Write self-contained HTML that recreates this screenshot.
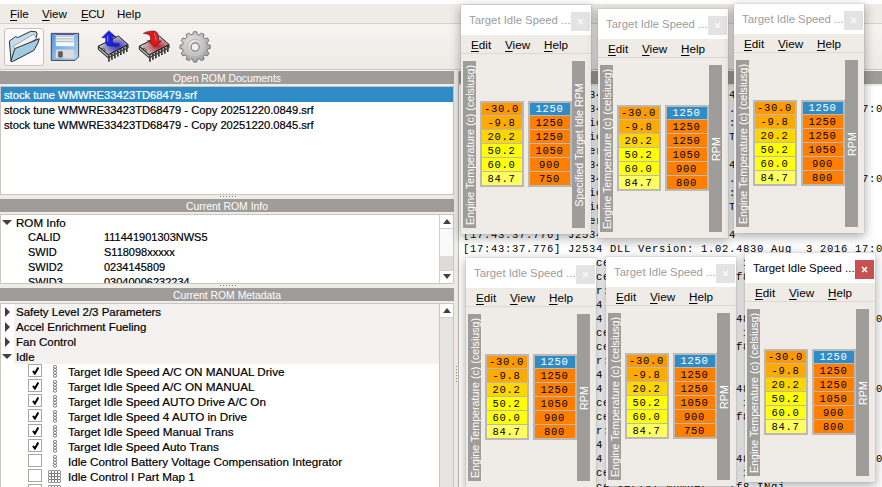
<!DOCTYPE html>
<html><head><meta charset="utf-8">
<style>
*{box-sizing:border-box;margin:0;padding:0}
html,body{width:882px;height:487px;overflow:hidden;background:#efebe7;font-family:"Liberation Sans",sans-serif;position:relative}
.a{position:absolute}
.ui{font-size:11.3px;color:#000;white-space:nowrap}
.u{text-decoration:underline;text-underline-offset:1.5px}
.hdr{position:absolute;height:13px;background:#9f9d9a;color:#fff;font-size:10.4px;text-align:center;line-height:13px;padding-top:1px;white-space:nowrap}
.box{position:absolute;background:#fff;border:1px solid #c9c5c1}
.row{position:absolute;left:0;height:15px;line-height:15px;font-size:11.3px;white-space:nowrap;-webkit-text-stroke:0.2px currentColor}
.con{position:absolute;left:4px;top:2px;margin:0;font-family:"Liberation Mono",monospace;font-size:10.5px;letter-spacing:0.7px;line-height:14px;color:#000;white-space:pre}
.win{position:absolute;width:130px;height:229px;background:#efebe7;box-shadow:0 0 0 1px rgba(120,120,120,0.10),0 3px 10px 1px rgba(0,0,0,0.3)}
.wt{position:absolute;left:0;top:0;width:130px;height:30px;background:#fff;padding-left:8px;font-size:11.35px;line-height:30px;white-space:nowrap}
.wc{position:absolute;left:110px;top:7px;width:19px;height:19px;text-align:center;font-size:13px;line-height:18px}
.wm{position:absolute;left:0;top:30px;width:130px;height:19px;background:#efebe7;border-bottom:1px solid #dcd8d4;font-size:11.7px;line-height:19px;white-space:nowrap}
.wm .m1{position:absolute;left:10px;top:0}
.wm .m2{position:absolute;left:44px;top:0}
.wm .m3{position:absolute;left:83px;top:0}
.wl{position:absolute;top:56px;width:13px;height:167px;background:#9f9d9a}
.wl span{position:absolute;left:50%;top:50%;transform:translate(-50%,-50%) rotate(-90deg);color:#fff;font-size:10.7px;line-height:13px;white-space:nowrap}
.tb{position:absolute;top:96px;width:44px;height:86px;background:#bcb8b4}
.cell{position:absolute;left:2px;width:40px;text-align:center;font-family:"Liberation Mono",monospace;font-size:10.5px;letter-spacing:0.7px;text-indent:-1px;color:#000}
</style></head><body>
<div class="a" style="left:0;top:0;width:882px;height:4px;background:#fff"></div>
<div class="a" style="left:0;top:4px;width:882px;height:19px;background:#efebe7"></div>
<div class="a" style="left:0;top:23px;width:882px;height:1px;background:#d6d2ce"></div>
<div class="a ui" style="left:10px;top:6px;line-height:15px;font-size:11.6px;letter-spacing:0px"><span class="u">F</span>ile</div>
<div class="a ui" style="left:42px;top:6px;line-height:15px;font-size:11.6px;letter-spacing:0px"><span class="u">V</span>iew</div>
<div class="a ui" style="left:81px;top:6px;line-height:15px;font-size:11.6px;letter-spacing:-0.45px"><span class="u">E</span>CU</div>
<div class="a ui" style="left:117px;top:6px;line-height:15px;font-size:11.6px;letter-spacing:0px">Help</div>
<div class="a" style="left:0;top:24px;width:882px;height:45px;background:linear-gradient(#f6f3f0,#eeebe7)"></div>
<div class="a" style="left:0;top:69px;width:882px;height:1px;background:#c9c5c1"></div>
<div class="a" style="left:0;top:70px;width:882px;height:1px;background:#f8f6f4"></div>
<!-- toolbar icons -->
<div class="a" style="left:4px;top:28px;width:40px;height:38px;border:1px solid #c6c3c0;border-radius:3px;background:#fbfaf9"></div>
<svg class="a" style="left:2px;top:25px" width="44" height="44" viewBox="0 0 487 487">
 <path d="M82 178 L150 128 L172 140 L318 70 L378 76 L388 98 L372 165 L135 315 L100 398 Z" fill="#c2ddec" stroke="#2b2b2b" stroke-width="11" stroke-linejoin="round"/>
 <path d="M128 232 L352 100 L382 150 L150 292 Z" fill="#f2f2f2" stroke="#555" stroke-width="5"/>
 <path d="M98 402 L142 262 L412 152 L398 200 L352 282 L118 404 Z" fill="#9fcbe3" stroke="#2b2b2b" stroke-width="11" stroke-linejoin="round"/>
</svg>
<svg class="a" style="left:46px;top:27px" width="38" height="38" viewBox="0 0 487 487">
 <defs><linearGradient id="fg" x1="0" y1="0" x2="1" y2="1"><stop offset="0" stop-color="#4f93dc"/><stop offset="1" stop-color="#b5daf5"/></linearGradient></defs>
 <path d="M68 82 L418 82 L418 382 L372 428 L68 428 Z" fill="url(#fg)" stroke="#3a3a3a" stroke-width="12" stroke-linejoin="round"/>
 <rect x="125" y="88" width="235" height="158" fill="#f4f8fa"/>
 <rect x="125" y="88" width="235" height="12" fill="#2626c0"/>
 <rect x="130" y="108" width="225" height="18" fill="#b9bcbc"/>
 <rect x="130" y="142" width="225" height="18" fill="#a9c9c9"/>
 <rect x="130" y="176" width="225" height="18" fill="#b9bcbc"/>
 <rect x="125" y="290" width="235" height="108" fill="#dcdcdc"/>
 <rect x="155" y="310" width="60" height="82" rx="18" fill="#5e5e5e"/>
</svg>
<svg class="a" style="left:94px;top:26px" width="38" height="38" viewBox="0 0 487 487">
 <defs><radialGradient id="cg94" cx="0.62" cy="0.55" r="0.55"><stop offset="0" stop-color="#3030c8"/><stop offset="0.6" stop-color="#8a8ac0"/><stop offset="1" stop-color="#c8c8c8"/></radialGradient></defs>
 <path d="M56 258 L56 302 L183 410 L436 282 L436 237 L183 368 Z" fill="#a8a8a8" stroke="#111" stroke-width="12" stroke-linejoin="round"/>
 <path d="M192 380 L192 454" stroke="#0a0a0a" stroke-width="20"/><path d="M194 390 L194 438" stroke="#e0e0e0" stroke-width="6"/><path d="M230 360 L230 434" stroke="#0a0a0a" stroke-width="20"/><path d="M232 370 L232 418" stroke="#e0e0e0" stroke-width="6"/><path d="M268 339 L268 413" stroke="#0a0a0a" stroke-width="20"/><path d="M270 349 L270 397" stroke="#e0e0e0" stroke-width="6"/><path d="M306 318 L306 392" stroke="#0a0a0a" stroke-width="20"/><path d="M308 328 L308 376" stroke="#e0e0e0" stroke-width="6"/><path d="M344 298 L344 372" stroke="#0a0a0a" stroke-width="20"/><path d="M346 308 L346 356" stroke="#e0e0e0" stroke-width="6"/><path d="M382 278 L382 352" stroke="#0a0a0a" stroke-width="20"/><path d="M384 288 L384 336" stroke="#e0e0e0" stroke-width="6"/><path d="M420 257 L420 331" stroke="#0a0a0a" stroke-width="20"/><path d="M422 267 L422 315" stroke="#e0e0e0" stroke-width="6"/>
 <path d="M56 258 L313 128 L436 237 L183 368 Z" fill="url(#cg94)" stroke="#111" stroke-width="12" stroke-linejoin="round"/>
 <path d="M92 292 Q120 270 140 300 L140 330" fill="none" stroke="#222" stroke-width="9"/>
 <path d="M100 150 L190 60 L282 142 L238 142 L238 206 Q240 226 322 226 L322 252 L200 258 Q150 252 150 206 L150 150 Z" fill="#2020e0" stroke="#101040" stroke-width="6" stroke-linejoin="round"/>
 <path d="M175 130 L175 200" fill="none" stroke="#9a9aff" stroke-width="14" stroke-linecap="round" opacity="0.8"/>
</svg><svg class="a" style="left:135px;top:26px" width="38" height="38" viewBox="0 0 487 487">
 <defs><radialGradient id="cg135" cx="0.62" cy="0.55" r="0.55"><stop offset="0" stop-color="#c02020"/><stop offset="0.6" stop-color="#c89090"/><stop offset="1" stop-color="#c8c8c8"/></radialGradient></defs>
 <path d="M56 258 L56 302 L183 410 L436 282 L436 237 L183 368 Z" fill="#a8a8a8" stroke="#111" stroke-width="12" stroke-linejoin="round"/>
 <path d="M192 380 L192 454" stroke="#0a0a0a" stroke-width="20"/><path d="M194 390 L194 438" stroke="#e0e0e0" stroke-width="6"/><path d="M230 360 L230 434" stroke="#0a0a0a" stroke-width="20"/><path d="M232 370 L232 418" stroke="#e0e0e0" stroke-width="6"/><path d="M268 339 L268 413" stroke="#0a0a0a" stroke-width="20"/><path d="M270 349 L270 397" stroke="#e0e0e0" stroke-width="6"/><path d="M306 318 L306 392" stroke="#0a0a0a" stroke-width="20"/><path d="M308 328 L308 376" stroke="#e0e0e0" stroke-width="6"/><path d="M344 298 L344 372" stroke="#0a0a0a" stroke-width="20"/><path d="M346 308 L346 356" stroke="#e0e0e0" stroke-width="6"/><path d="M382 278 L382 352" stroke="#0a0a0a" stroke-width="20"/><path d="M384 288 L384 336" stroke="#e0e0e0" stroke-width="6"/><path d="M420 257 L420 331" stroke="#0a0a0a" stroke-width="20"/><path d="M422 267 L422 315" stroke="#e0e0e0" stroke-width="6"/>
 <path d="M56 258 L313 128 L436 237 L183 368 Z" fill="url(#cg135)" stroke="#111" stroke-width="12" stroke-linejoin="round"/>
 <path d="M92 292 Q120 270 140 300 L140 330" fill="none" stroke="#222" stroke-width="9"/>
 <path d="M106 96 Q150 60 250 64 Q302 76 302 150 L302 192 L338 192 L250 266 L158 188 L198 188 L198 142 Q190 100 106 96 Z" fill="#e01818" stroke="#101040" stroke-width="6" stroke-linejoin="round"/>
 <path d="M250 100 Q270 130 268 190" fill="none" stroke="#ff8080" stroke-width="14" stroke-linecap="round" opacity="0.8"/>
</svg><svg class="a" style="left:176px;top:27px" width="38" height="38" viewBox="0 0 487 487">
 <defs><radialGradient id="gg" cx="0.4" cy="0.35" r="0.75"><stop offset="0" stop-color="#ececec"/><stop offset="1" stop-color="#989898"/></radialGradient></defs>
 <path d="M216 95 L225 61 L265 61 L274 95 L300 102 L324 77 L360 97 L350 131 L369 150 L403 140 L423 176 L398 200 L405 226 L439 235 L439 275 L405 284 L398 310 L423 334 L403 370 L369 360 L350 379 L360 413 L324 433 L300 408 L274 415 L265 449 L225 449 L216 415 L190 408 L166 433 L130 413 L140 379 L121 360 L87 370 L67 334 L92 310 L85 284 L51 275 L51 235 L85 226 L92 200 L67 176 L87 140 L121 150 L140 131 L130 97 L166 77 L190 102 Z" fill="url(#gg)" stroke="#707070" stroke-width="12" stroke-linejoin="round"/>
 <circle cx="245" cy="255" r="100" fill="none" stroke="#d4d4d4" stroke-width="26"/>
 <circle cx="245" cy="255" r="100" fill="none" stroke="#9a9a9a" stroke-width="6"/>
 <circle cx="245" cy="255" r="52" fill="#f2efeb" stroke="#7a7a7a" stroke-width="14"/>
</svg>


<div class="hdr" style="left:0px;top:71px;width:454px">Open ROM Documents</div>
<div class="box" style="left:0;top:86px;width:454px;height:109px">
<div class="row" style="top:0;width:452px;background:#308cc6;color:#fff;padding-left:3px;padding-top:1px;font-size:11.2px">stock tune WMWRE33423TD68479.srf</div>
<div class="row" style="top:15px;padding-left:3px;padding-top:1px;font-size:11.2px">stock tune WMWRE33423TD68479 - Copy 20251220.0849.srf</div>
<div class="row" style="top:30px;padding-left:3px;padding-top:1px;font-size:11.2px">stock tune WMWRE33423TD68479 - Copy 20251220.0845.srf</div>
</div>
<div class="hdr" style="left:0px;top:199px;width:454px">Current ROM Info</div>
<div class="box" style="left:0;top:214px;width:454px;height:70px;overflow:hidden">
<div class="a" style="left:1px;top:5px;width:0;height:0;border-left:5px solid transparent;border-right:5px solid transparent;border-top:5px solid #404040"></div>
<div class="row" style="top:0;left:15px;font-size:11.6px">ROM Info</div>
<div class="row" style="top:15px;left:27px;font-size:11px">CALID</div><div class="row" style="top:15px;left:103px;font-size:11px">111441901303NWS5</div>
<div class="row" style="top:30px;left:27px;font-size:11px">SWID</div><div class="row" style="top:30px;left:103px;font-size:11px">S118098xxxxx</div>
<div class="row" style="top:45px;left:27px;font-size:11px">SWID2</div><div class="row" style="top:45px;left:103px;font-size:11px">0234145809</div>
<div class="row" style="top:60px;left:27px;font-size:11px">SWID3</div><div class="row" style="top:60px;left:103px;font-size:11px">03040006232234</div>
<div class="a" style="left:438px;top:0;width:15px;height:68px;background:#fafafa;border-left:1px solid #d4d0cc"></div>
<div class="a" style="left:439px;top:0;width:14px;height:14px;background:#fff;border-bottom:1px solid #d4d0cc"></div>
<div class="a" style="left:439px;top:41px;width:14px;height:14px;background:#dedcd9"></div>
<div class="a" style="left:439px;top:55px;width:14px;height:13px;background:#fff;border-top:1px solid #d4d0cc"></div>
<div class="a" style="left:442px;top:4px;width:0;height:0;border-left:4px solid transparent;border-right:4px solid transparent;border-bottom:5px solid #404040"></div>
<div class="a" style="left:442px;top:59px;width:0;height:0;border-left:4px solid transparent;border-right:4px solid transparent;border-top:5px solid #404040"></div>
</div>
<div class="hdr" style="left:0px;top:288px;width:454px">Current ROM Metadata</div>
<div class="box" style="left:0;top:303px;width:454px;height:190px;overflow:hidden">
<div class="a" style="left:13px;top:0px;width:425px;height:15px;background:#f3f2f0"></div>
<div class="a" style="left:4px;top:3px;width:0;height:0;border-top:5px solid transparent;border-bottom:5px solid transparent;border-left:5px solid #404040"></div>
<div class="row" style="top:0px;left:15px;font-size:11.5px;padding-top:1px">Safety Level 2/3 Parameters</div>
<div class="a" style="left:13px;top:15px;width:425px;height:15px;background:#f3f2f0"></div>
<div class="a" style="left:4px;top:18px;width:0;height:0;border-top:5px solid transparent;border-bottom:5px solid transparent;border-left:5px solid #404040"></div>
<div class="row" style="top:15px;left:15px;font-size:11.5px;padding-top:1px">Accel Enrichment Fueling</div>
<div class="a" style="left:13px;top:30px;width:425px;height:15px;background:#f3f2f0"></div>
<div class="a" style="left:4px;top:33px;width:0;height:0;border-top:5px solid transparent;border-bottom:5px solid transparent;border-left:5px solid #404040"></div>
<div class="row" style="top:30px;left:15px;font-size:11.5px;padding-top:1px">Fan Control</div>
<div class="a" style="left:13px;top:45px;width:425px;height:15px;background:#f3f2f0"></div>
<div class="a" style="left:1px;top:50px;width:0;height:0;border-left:5px solid transparent;border-right:5px solid transparent;border-top:5px solid #404040"></div>
<div class="row" style="top:45px;left:15px;font-size:11.5px;padding-top:1px">Idle</div>
<div class="a" style="left:27px;top:60px;width:14px;height:13px;border:1px solid #a9a5a1;background:#fff"></div>
<svg class="a" style="left:30px;top:62px" width="9" height="9" viewBox="0 0 9 9"><path d="M2 4.9 L3.9 7.5 L7.3 1.6" stroke="#000" stroke-width="2" fill="none"/></svg>
<svg class="a" style="left:51px;top:61px" width="6" height="13" viewBox="0 0 6 13"><g fill="none" stroke="#6e6e6e" stroke-width="1"><rect x="1.5" y="0.5" width="3" height="2.6" rx="1"/><rect x="1.5" y="3.5" width="3" height="2.6" rx="1"/><rect x="1.5" y="6.5" width="3" height="2.6" rx="1"/><rect x="1.5" y="9.5" width="3" height="2.6" rx="1"/></g></svg>
<div class="row" style="top:60px;left:67px;font-size:11.7px">Target Idle Speed A/C ON MANUAL Drive</div>
<div class="a" style="left:27px;top:75px;width:14px;height:13px;border:1px solid #a9a5a1;background:#fff"></div>
<svg class="a" style="left:30px;top:77px" width="9" height="9" viewBox="0 0 9 9"><path d="M2 4.9 L3.9 7.5 L7.3 1.6" stroke="#000" stroke-width="2" fill="none"/></svg>
<svg class="a" style="left:51px;top:76px" width="6" height="13" viewBox="0 0 6 13"><g fill="none" stroke="#6e6e6e" stroke-width="1"><rect x="1.5" y="0.5" width="3" height="2.6" rx="1"/><rect x="1.5" y="3.5" width="3" height="2.6" rx="1"/><rect x="1.5" y="6.5" width="3" height="2.6" rx="1"/><rect x="1.5" y="9.5" width="3" height="2.6" rx="1"/></g></svg>
<div class="row" style="top:75px;left:67px;font-size:11.7px">Target Idle Speed A/C ON MANUAL</div>
<div class="a" style="left:27px;top:90px;width:14px;height:13px;border:1px solid #a9a5a1;background:#fff"></div>
<svg class="a" style="left:30px;top:92px" width="9" height="9" viewBox="0 0 9 9"><path d="M2 4.9 L3.9 7.5 L7.3 1.6" stroke="#000" stroke-width="2" fill="none"/></svg>
<svg class="a" style="left:51px;top:91px" width="6" height="13" viewBox="0 0 6 13"><g fill="none" stroke="#6e6e6e" stroke-width="1"><rect x="1.5" y="0.5" width="3" height="2.6" rx="1"/><rect x="1.5" y="3.5" width="3" height="2.6" rx="1"/><rect x="1.5" y="6.5" width="3" height="2.6" rx="1"/><rect x="1.5" y="9.5" width="3" height="2.6" rx="1"/></g></svg>
<div class="row" style="top:90px;left:67px;font-size:11.7px">Target Idle Speed AUTO Drive A/C On</div>
<div class="a" style="left:27px;top:105px;width:14px;height:13px;border:1px solid #a9a5a1;background:#fff"></div>
<svg class="a" style="left:30px;top:107px" width="9" height="9" viewBox="0 0 9 9"><path d="M2 4.9 L3.9 7.5 L7.3 1.6" stroke="#000" stroke-width="2" fill="none"/></svg>
<svg class="a" style="left:51px;top:106px" width="6" height="13" viewBox="0 0 6 13"><g fill="none" stroke="#6e6e6e" stroke-width="1"><rect x="1.5" y="0.5" width="3" height="2.6" rx="1"/><rect x="1.5" y="3.5" width="3" height="2.6" rx="1"/><rect x="1.5" y="6.5" width="3" height="2.6" rx="1"/><rect x="1.5" y="9.5" width="3" height="2.6" rx="1"/></g></svg>
<div class="row" style="top:105px;left:67px;font-size:11.7px">Target Idle Speed 4 AUTO in Drive</div>
<div class="a" style="left:27px;top:120px;width:14px;height:13px;border:1px solid #a9a5a1;background:#fff"></div>
<svg class="a" style="left:30px;top:122px" width="9" height="9" viewBox="0 0 9 9"><path d="M2 4.9 L3.9 7.5 L7.3 1.6" stroke="#000" stroke-width="2" fill="none"/></svg>
<svg class="a" style="left:51px;top:121px" width="6" height="13" viewBox="0 0 6 13"><g fill="none" stroke="#6e6e6e" stroke-width="1"><rect x="1.5" y="0.5" width="3" height="2.6" rx="1"/><rect x="1.5" y="3.5" width="3" height="2.6" rx="1"/><rect x="1.5" y="6.5" width="3" height="2.6" rx="1"/><rect x="1.5" y="9.5" width="3" height="2.6" rx="1"/></g></svg>
<div class="row" style="top:120px;left:67px;font-size:11.7px">Target Idle Speed Manual Trans</div>
<div class="a" style="left:27px;top:135px;width:14px;height:13px;border:1px solid #a9a5a1;background:#fff"></div>
<svg class="a" style="left:30px;top:137px" width="9" height="9" viewBox="0 0 9 9"><path d="M2 4.9 L3.9 7.5 L7.3 1.6" stroke="#000" stroke-width="2" fill="none"/></svg>
<svg class="a" style="left:51px;top:136px" width="6" height="13" viewBox="0 0 6 13"><g fill="none" stroke="#6e6e6e" stroke-width="1"><rect x="1.5" y="0.5" width="3" height="2.6" rx="1"/><rect x="1.5" y="3.5" width="3" height="2.6" rx="1"/><rect x="1.5" y="6.5" width="3" height="2.6" rx="1"/><rect x="1.5" y="9.5" width="3" height="2.6" rx="1"/></g></svg>
<div class="row" style="top:135px;left:67px;font-size:11.7px">Target Idle Speed Auto Trans</div>
<div class="a" style="left:27px;top:150px;width:14px;height:13px;border:1px solid #a9a5a1;background:#fff"></div>
<svg class="a" style="left:51px;top:151px" width="6" height="13" viewBox="0 0 6 13"><g fill="none" stroke="#6e6e6e" stroke-width="1"><rect x="1.5" y="0.5" width="3" height="2.6" rx="1"/><rect x="1.5" y="3.5" width="3" height="2.6" rx="1"/><rect x="1.5" y="6.5" width="3" height="2.6" rx="1"/><rect x="1.5" y="9.5" width="3" height="2.6" rx="1"/></g></svg>
<div class="row" style="top:150px;left:67px;font-size:11.7px">Idle Control Battery Voltage Compensation Integrator</div>
<div class="a" style="left:27px;top:165px;width:14px;height:13px;border:1px solid #a9a5a1;background:#fff"></div>
<svg class="a" style="left:47px;top:166px" width="14" height="14" viewBox="0 0 14 14"><g fill="none" stroke="#6e6e6e" stroke-width="1"><rect x="0.5" y="0.5" width="3" height="3" rx="1"/><rect x="0.5" y="3.5" width="3" height="3" rx="1"/><rect x="0.5" y="6.5" width="3" height="3" rx="1"/><rect x="0.5" y="9.5" width="3" height="3" rx="1"/><rect x="3.5" y="0.5" width="3" height="3" rx="1"/><rect x="3.5" y="3.5" width="3" height="3" rx="1"/><rect x="3.5" y="6.5" width="3" height="3" rx="1"/><rect x="3.5" y="9.5" width="3" height="3" rx="1"/><rect x="6.5" y="0.5" width="3" height="3" rx="1"/><rect x="6.5" y="3.5" width="3" height="3" rx="1"/><rect x="6.5" y="6.5" width="3" height="3" rx="1"/><rect x="6.5" y="9.5" width="3" height="3" rx="1"/><rect x="9.5" y="0.5" width="3" height="3" rx="1"/><rect x="9.5" y="3.5" width="3" height="3" rx="1"/><rect x="9.5" y="6.5" width="3" height="3" rx="1"/><rect x="9.5" y="9.5" width="3" height="3" rx="1"/></g></svg>
<div class="row" style="top:165px;left:67px;font-size:11.7px">Idle Control I Part Map 1</div>
<div class="a" style="left:27px;top:180px;width:14px;height:13px;border:1px solid #a9a5a1;background:#fff"></div>
<svg class="a" style="left:47px;top:181px" width="14" height="14" viewBox="0 0 14 14"><g fill="none" stroke="#6e6e6e" stroke-width="1"><rect x="0.5" y="0.5" width="3" height="3" rx="1"/><rect x="0.5" y="3.5" width="3" height="3" rx="1"/><rect x="0.5" y="6.5" width="3" height="3" rx="1"/><rect x="0.5" y="9.5" width="3" height="3" rx="1"/><rect x="3.5" y="0.5" width="3" height="3" rx="1"/><rect x="3.5" y="3.5" width="3" height="3" rx="1"/><rect x="3.5" y="6.5" width="3" height="3" rx="1"/><rect x="3.5" y="9.5" width="3" height="3" rx="1"/><rect x="6.5" y="0.5" width="3" height="3" rx="1"/><rect x="6.5" y="3.5" width="3" height="3" rx="1"/><rect x="6.5" y="6.5" width="3" height="3" rx="1"/><rect x="6.5" y="9.5" width="3" height="3" rx="1"/><rect x="9.5" y="0.5" width="3" height="3" rx="1"/><rect x="9.5" y="3.5" width="3" height="3" rx="1"/><rect x="9.5" y="6.5" width="3" height="3" rx="1"/><rect x="9.5" y="9.5" width="3" height="3" rx="1"/></g></svg>
<div class="row" style="top:180px;left:67px;font-size:11.7px">Idle Control P Part Map 1</div>
<div class="a" style="left:438px;top:0;width:15px;height:190px;background:#e6e4e1;border-left:1px solid #c9c5c1"></div>
<div class="a" style="left:439px;top:0;width:14px;height:14px;background:#fff;border-bottom:1px solid #d4d0cc"></div>
<div class="a" style="left:442px;top:4px;width:0;height:0;border-left:4px solid transparent;border-right:4px solid transparent;border-bottom:5px solid #404040"></div>
</div>
<div class="a" style="left:220px;top:196px;width:1px;height:1px;background:#8a8784;box-shadow:0 0 0.5px #b5b2af"></div>
<div class="a" style="left:223px;top:196px;width:1px;height:1px;background:#8a8784;box-shadow:0 0 0.5px #b5b2af"></div>
<div class="a" style="left:226px;top:196px;width:1px;height:1px;background:#8a8784;box-shadow:0 0 0.5px #b5b2af"></div>
<div class="a" style="left:229px;top:196px;width:1px;height:1px;background:#8a8784;box-shadow:0 0 0.5px #b5b2af"></div>
<div class="a" style="left:232px;top:196px;width:1px;height:1px;background:#8a8784;box-shadow:0 0 0.5px #b5b2af"></div>
<div class="a" style="left:235px;top:196px;width:1px;height:1px;background:#8a8784;box-shadow:0 0 0.5px #b5b2af"></div>
<div class="a" style="left:220px;top:285px;width:1px;height:1px;background:#8a8784;box-shadow:0 0 0.5px #b5b2af"></div>
<div class="a" style="left:223px;top:285px;width:1px;height:1px;background:#8a8784;box-shadow:0 0 0.5px #b5b2af"></div>
<div class="a" style="left:226px;top:285px;width:1px;height:1px;background:#8a8784;box-shadow:0 0 0.5px #b5b2af"></div>
<div class="a" style="left:229px;top:285px;width:1px;height:1px;background:#8a8784;box-shadow:0 0 0.5px #b5b2af"></div>
<div class="a" style="left:232px;top:285px;width:1px;height:1px;background:#8a8784;box-shadow:0 0 0.5px #b5b2af"></div>
<div class="a" style="left:235px;top:285px;width:1px;height:1px;background:#8a8784;box-shadow:0 0 0.5px #b5b2af"></div>
<div class="a" style="left:456px;top:366px;width:1px;height:1px;background:#8a8784;box-shadow:0 0 0.5px #b5b2af"></div>
<div class="a" style="left:456px;top:369px;width:1px;height:1px;background:#8a8784;box-shadow:0 0 0.5px #b5b2af"></div>
<div class="a" style="left:456px;top:372px;width:1px;height:1px;background:#8a8784;box-shadow:0 0 0.5px #b5b2af"></div>
<div class="a" style="left:456px;top:375px;width:1px;height:1px;background:#8a8784;box-shadow:0 0 0.5px #b5b2af"></div>
<div class="a" style="left:456px;top:378px;width:1px;height:1px;background:#8a8784;box-shadow:0 0 0.5px #b5b2af"></div>
<div class="a" style="left:456px;top:381px;width:1px;height:1px;background:#8a8784;box-shadow:0 0 0.5px #b5b2af"></div>
<div class="a" style="left:458px;top:71px;width:1px;height:416px;background:#b8b4b0"></div>
<div class="hdr" style="left:459px;top:71px;width:423px"></div>
<div class="a" style="left:459px;top:86px;width:423px;height:401px;background:#fff;overflow:hidden"><pre class="con">[17:43:37.776] J2534 API Version: 04.04
[17:43:37.776] J2534 DLL Version: 1.02.4830 Aug  3 2016 17:05:36
[17:43:37.776] Device Firmware Version: 1.17.4844
[17:43:37.776] Device Serial Number:  Tf8 INgj
[17:43:37.776] Power: 12.4V
[17:43:37.776] J2534 API Version: 04.04
[17:43:37.776] J2534 DLL Version: 1.02.4830 Aug  3 2016 17:05:36
[17:43:37.776] Device Firmware Version: 1.17.4844
[17:43:37.776] Device Serial Number:  Tf8 INgj
[17:43:37.776] Power: 12.4V
[17:43:37.776] J2534 API Version: 04.04
[17:43:37.776] J2534 DLL Version: 1.02.4830 Aug  3 2016 17:05:36
 17:43:37.776] Device Firmware Version: 1.17.4844
 17:43:37.776] Device Serial Number:  Tf8 INgj
 17:43:37.776] Power: 12.4V
 17:43:37.776] J2534 API Version: 04.04
 17:43:37.776] J2534 DLL Version: 1.02.4830 Aug  3 2016 17:05:36
 17:43:37.776] Device Firmware Version: 1.17.4844
 17:43:37.776] Device Serial Number:  Tf8 INgj
 17:43:37.776] Power: 12.4V
 17:43:37.776] J2534 API Version: 04.04
 17:43:37.776] J2534 DLL Version: 1.02.4830 Aug  3 2016 17:05:36
 17:43:37.776] Device Firmware Version: 1.17.4844
 17:43:37.776] Device Serial Number:  Tf8 INgj
 17:43:37.776] Power: 12.4V
 17:43:37.776] J2534 API Version: 04.04
 17:43:37.776] J2534 DLL Version: 1.02.4830 Aug  3 2016 17:05:36
 17:43:37.776] Device Firmware Version: 1.17.4844
 17:43:37.776] Device Serial Number:  Tf8 INgj
 17:43:37.776] Power: 12.4V</pre></div>
<div class="win" style="left:461px;top:5px">
<div class="wt" style="color:#9d9d9d">Target Idle Speed ...</div>
<svg class="wc" style="background:#e3e3e3" width="19" height="19" viewBox="0 0 19 19"><path d="M7.6 7.6 L11.4 11.4 M11.4 7.6 L7.6 11.4" stroke="#f7f7f7" stroke-width="1.5" stroke-linecap="square"/></svg>
<div class="wm"><span class="m1"><span class="u">E</span>dit</span><span class="m2"><span class="u">V</span>iew</span><span class="m3"><span class="u">H</span>elp</span></div>
<div class="wl" style="left:2px"><span>Engine Temperature (c) (celsiusg)</span></div>
<div class="wl" style="left:111px"><span>Specified Target Idle RPM</span></div>
<div class="tb" style="left:19px">
<div class="cell" style="top:2px;height:12px;line-height:12px;background:#ff9900;padding-top:0px">-30.0</div>
<div class="cell" style="top:15px;height:13px;line-height:13px;background:#ffaa00;padding-top:1px">-9.8</div>
<div class="cell" style="top:29px;height:13px;line-height:13px;background:#ffd500;padding-top:1px">20.2</div>
<div class="cell" style="top:43px;height:13px;line-height:13px;background:#ffff00;padding-top:1px">50.2</div>
<div class="cell" style="top:57px;height:13px;line-height:13px;background:#ffff10;padding-top:1px">60.0</div>
<div class="cell" style="top:71px;height:13px;line-height:13px;background:#ffff60;padding-top:1px">84.7</div>
</div>
<div class="tb" style="left:67px">
<div class="cell" style="top:2px;height:12px;line-height:12px;background:#308cc6;color:#fff;padding-top:0px">1250</div>
<div class="cell" style="top:15px;height:13px;line-height:13px;background:#ff8000;color:#000;padding-top:1px">1250</div>
<div class="cell" style="top:29px;height:13px;line-height:13px;background:#ff8000;color:#000;padding-top:1px">1250</div>
<div class="cell" style="top:43px;height:13px;line-height:13px;background:#ff8000;color:#000;padding-top:1px">1050</div>
<div class="cell" style="top:57px;height:13px;line-height:13px;background:#ff8000;color:#000;padding-top:1px">900</div>
<div class="cell" style="top:71px;height:13px;line-height:13px;background:#ff8000;color:#000;padding-top:1px">750</div>
</div>
</div>
<div class="win" style="left:598px;top:9px">
<div class="wt" style="color:#9d9d9d">Target Idle Speed ...</div>
<svg class="wc" style="background:#e3e3e3" width="19" height="19" viewBox="0 0 19 19"><path d="M7.6 7.6 L11.4 11.4 M11.4 7.6 L7.6 11.4" stroke="#f7f7f7" stroke-width="1.5" stroke-linecap="square"/></svg>
<div class="wm"><span class="m1"><span class="u">E</span>dit</span><span class="m2"><span class="u">V</span>iew</span><span class="m3"><span class="u">H</span>elp</span></div>
<div class="wl" style="left:2px"><span>Engine Temperature (c) (celsiusg)</span></div>
<div class="wl" style="left:111px"><span>RPM</span></div>
<div class="tb" style="left:19px">
<div class="cell" style="top:2px;height:12px;line-height:12px;background:#ff9900;padding-top:0px">-30.0</div>
<div class="cell" style="top:15px;height:13px;line-height:13px;background:#ffaa00;padding-top:1px">-9.8</div>
<div class="cell" style="top:29px;height:13px;line-height:13px;background:#ffd500;padding-top:1px">20.2</div>
<div class="cell" style="top:43px;height:13px;line-height:13px;background:#ffff00;padding-top:1px">50.2</div>
<div class="cell" style="top:57px;height:13px;line-height:13px;background:#ffff10;padding-top:1px">60.0</div>
<div class="cell" style="top:71px;height:13px;line-height:13px;background:#ffff60;padding-top:1px">84.7</div>
</div>
<div class="tb" style="left:67px">
<div class="cell" style="top:2px;height:12px;line-height:12px;background:#308cc6;color:#fff;padding-top:0px">1250</div>
<div class="cell" style="top:15px;height:13px;line-height:13px;background:#ff8000;color:#000;padding-top:1px">1250</div>
<div class="cell" style="top:29px;height:13px;line-height:13px;background:#ff8000;color:#000;padding-top:1px">1250</div>
<div class="cell" style="top:43px;height:13px;line-height:13px;background:#ff8000;color:#000;padding-top:1px">1050</div>
<div class="cell" style="top:57px;height:13px;line-height:13px;background:#ff8000;color:#000;padding-top:1px">900</div>
<div class="cell" style="top:71px;height:13px;line-height:13px;background:#ff8000;color:#000;padding-top:1px">800</div>
</div>
</div>
<div class="win" style="left:734px;top:4px">
<div class="wt" style="color:#9d9d9d">Target Idle Speed ...</div>
<svg class="wc" style="background:#e3e3e3" width="19" height="19" viewBox="0 0 19 19"><path d="M7.6 7.6 L11.4 11.4 M11.4 7.6 L7.6 11.4" stroke="#f7f7f7" stroke-width="1.5" stroke-linecap="square"/></svg>
<div class="wm"><span class="m1"><span class="u">E</span>dit</span><span class="m2"><span class="u">V</span>iew</span><span class="m3"><span class="u">H</span>elp</span></div>
<div class="wl" style="left:2px"><span>Engine Temperature (c) (celsiusg)</span></div>
<div class="wl" style="left:111px"><span>RPM</span></div>
<div class="tb" style="left:19px">
<div class="cell" style="top:2px;height:12px;line-height:12px;background:#ff9900;padding-top:0px">-30.0</div>
<div class="cell" style="top:15px;height:13px;line-height:13px;background:#ffaa00;padding-top:1px">-9.8</div>
<div class="cell" style="top:29px;height:13px;line-height:13px;background:#ffd500;padding-top:1px">20.2</div>
<div class="cell" style="top:43px;height:13px;line-height:13px;background:#ffff00;padding-top:1px">50.2</div>
<div class="cell" style="top:57px;height:13px;line-height:13px;background:#ffff10;padding-top:1px">60.0</div>
<div class="cell" style="top:71px;height:13px;line-height:13px;background:#ffff60;padding-top:1px">84.7</div>
</div>
<div class="tb" style="left:67px">
<div class="cell" style="top:2px;height:12px;line-height:12px;background:#308cc6;color:#fff;padding-top:0px">1250</div>
<div class="cell" style="top:15px;height:13px;line-height:13px;background:#ff8000;color:#000;padding-top:1px">1250</div>
<div class="cell" style="top:29px;height:13px;line-height:13px;background:#ff8000;color:#000;padding-top:1px">1250</div>
<div class="cell" style="top:43px;height:13px;line-height:13px;background:#ff8000;color:#000;padding-top:1px">1050</div>
<div class="cell" style="top:57px;height:13px;line-height:13px;background:#ff8000;color:#000;padding-top:1px">900</div>
<div class="cell" style="top:71px;height:13px;line-height:13px;background:#ff8000;color:#000;padding-top:1px">800</div>
</div>
</div>
<div class="win" style="left:466px;top:258px">
<div class="wt" style="color:#9d9d9d">Target Idle Speed ...</div>
<svg class="wc" style="background:#e3e3e3" width="19" height="19" viewBox="0 0 19 19"><path d="M7.6 7.6 L11.4 11.4 M11.4 7.6 L7.6 11.4" stroke="#f7f7f7" stroke-width="1.5" stroke-linecap="square"/></svg>
<div class="wm"><span class="m1"><span class="u">E</span>dit</span><span class="m2"><span class="u">V</span>iew</span><span class="m3"><span class="u">H</span>elp</span></div>
<div class="wl" style="left:2px"><span>Engine Temperature (c) (celsiusg)</span></div>
<div class="wl" style="left:111px"><span>RPM</span></div>
<div class="tb" style="left:19px">
<div class="cell" style="top:2px;height:12px;line-height:12px;background:#ff9900;padding-top:0px">-30.0</div>
<div class="cell" style="top:15px;height:13px;line-height:13px;background:#ffaa00;padding-top:1px">-9.8</div>
<div class="cell" style="top:29px;height:13px;line-height:13px;background:#ffd500;padding-top:1px">20.2</div>
<div class="cell" style="top:43px;height:13px;line-height:13px;background:#ffff00;padding-top:1px">50.2</div>
<div class="cell" style="top:57px;height:13px;line-height:13px;background:#ffff10;padding-top:1px">60.0</div>
<div class="cell" style="top:71px;height:13px;line-height:13px;background:#ffff60;padding-top:1px">84.7</div>
</div>
<div class="tb" style="left:67px">
<div class="cell" style="top:2px;height:12px;line-height:12px;background:#308cc6;color:#fff;padding-top:0px">1250</div>
<div class="cell" style="top:15px;height:13px;line-height:13px;background:#ff8000;color:#000;padding-top:1px">1250</div>
<div class="cell" style="top:29px;height:13px;line-height:13px;background:#ff8000;color:#000;padding-top:1px">1250</div>
<div class="cell" style="top:43px;height:13px;line-height:13px;background:#ff8000;color:#000;padding-top:1px">1050</div>
<div class="cell" style="top:57px;height:13px;line-height:13px;background:#ff8000;color:#000;padding-top:1px">900</div>
<div class="cell" style="top:71px;height:13px;line-height:13px;background:#ff8000;color:#000;padding-top:1px">800</div>
</div>
</div>
<div class="win" style="left:606px;top:257px">
<div class="wt" style="color:#9d9d9d">Target Idle Speed ...</div>
<svg class="wc" style="background:#e3e3e3" width="19" height="19" viewBox="0 0 19 19"><path d="M7.6 7.6 L11.4 11.4 M11.4 7.6 L7.6 11.4" stroke="#f7f7f7" stroke-width="1.5" stroke-linecap="square"/></svg>
<div class="wm"><span class="m1"><span class="u">E</span>dit</span><span class="m2"><span class="u">V</span>iew</span><span class="m3"><span class="u">H</span>elp</span></div>
<div class="wl" style="left:2px"><span>Engine Temperature (c) (celsiusg)</span></div>
<div class="wl" style="left:111px"><span>RPM</span></div>
<div class="tb" style="left:19px">
<div class="cell" style="top:2px;height:12px;line-height:12px;background:#ff9900;padding-top:0px">-30.0</div>
<div class="cell" style="top:15px;height:13px;line-height:13px;background:#ffaa00;padding-top:1px">-9.8</div>
<div class="cell" style="top:29px;height:13px;line-height:13px;background:#ffd500;padding-top:1px">20.2</div>
<div class="cell" style="top:43px;height:13px;line-height:13px;background:#ffff00;padding-top:1px">50.2</div>
<div class="cell" style="top:57px;height:13px;line-height:13px;background:#ffff10;padding-top:1px">60.0</div>
<div class="cell" style="top:71px;height:13px;line-height:13px;background:#ffff60;padding-top:1px">84.7</div>
</div>
<div class="tb" style="left:67px">
<div class="cell" style="top:2px;height:12px;line-height:12px;background:#308cc6;color:#fff;padding-top:0px">1250</div>
<div class="cell" style="top:15px;height:13px;line-height:13px;background:#ff8000;color:#000;padding-top:1px">1250</div>
<div class="cell" style="top:29px;height:13px;line-height:13px;background:#ff8000;color:#000;padding-top:1px">1250</div>
<div class="cell" style="top:43px;height:13px;line-height:13px;background:#ff8000;color:#000;padding-top:1px">1050</div>
<div class="cell" style="top:57px;height:13px;line-height:13px;background:#ff8000;color:#000;padding-top:1px">900</div>
<div class="cell" style="top:71px;height:13px;line-height:13px;background:#ff8000;color:#000;padding-top:1px">750</div>
</div>
</div>
<div class="win" style="left:745px;top:253px">
<div class="wt" style="color:#000">Target Idle Speed ...</div>
<svg class="wc" style="background:#c75050" width="19" height="19" viewBox="0 0 19 19"><path d="M7.6 7.6 L11.4 11.4 M11.4 7.6 L7.6 11.4" stroke="#fff" stroke-width="1.5" stroke-linecap="square"/></svg>
<div class="wm"><span class="m1"><span class="u">E</span>dit</span><span class="m2"><span class="u">V</span>iew</span><span class="m3"><span class="u">H</span>elp</span></div>
<div class="wl" style="left:2px"><span>Engine Temperature (c) (celsiusg)</span></div>
<div class="wl" style="left:111px"><span>RPM</span></div>
<div class="tb" style="left:19px">
<div class="cell" style="top:2px;height:12px;line-height:12px;background:#ff9900;padding-top:0px">-30.0</div>
<div class="cell" style="top:15px;height:13px;line-height:13px;background:#ffaa00;padding-top:1px">-9.8</div>
<div class="cell" style="top:29px;height:13px;line-height:13px;background:#ffd500;padding-top:1px">20.2</div>
<div class="cell" style="top:43px;height:13px;line-height:13px;background:#ffff00;padding-top:1px">50.2</div>
<div class="cell" style="top:57px;height:13px;line-height:13px;background:#ffff10;padding-top:1px">60.0</div>
<div class="cell" style="top:71px;height:13px;line-height:13px;background:#ffff60;padding-top:1px">84.7</div>
</div>
<div class="tb" style="left:67px">
<div class="cell" style="top:2px;height:12px;line-height:12px;background:#308cc6;color:#fff;padding-top:0px">1250</div>
<div class="cell" style="top:15px;height:13px;line-height:13px;background:#ff8000;color:#000;padding-top:1px">1250</div>
<div class="cell" style="top:29px;height:13px;line-height:13px;background:#ff8000;color:#000;padding-top:1px">1250</div>
<div class="cell" style="top:43px;height:13px;line-height:13px;background:#ff8000;color:#000;padding-top:1px">1050</div>
<div class="cell" style="top:57px;height:13px;line-height:13px;background:#ff8000;color:#000;padding-top:1px">900</div>
<div class="cell" style="top:71px;height:13px;line-height:13px;background:#ff8000;color:#000;padding-top:1px">800</div>
</div>
</div>
</body></html>
